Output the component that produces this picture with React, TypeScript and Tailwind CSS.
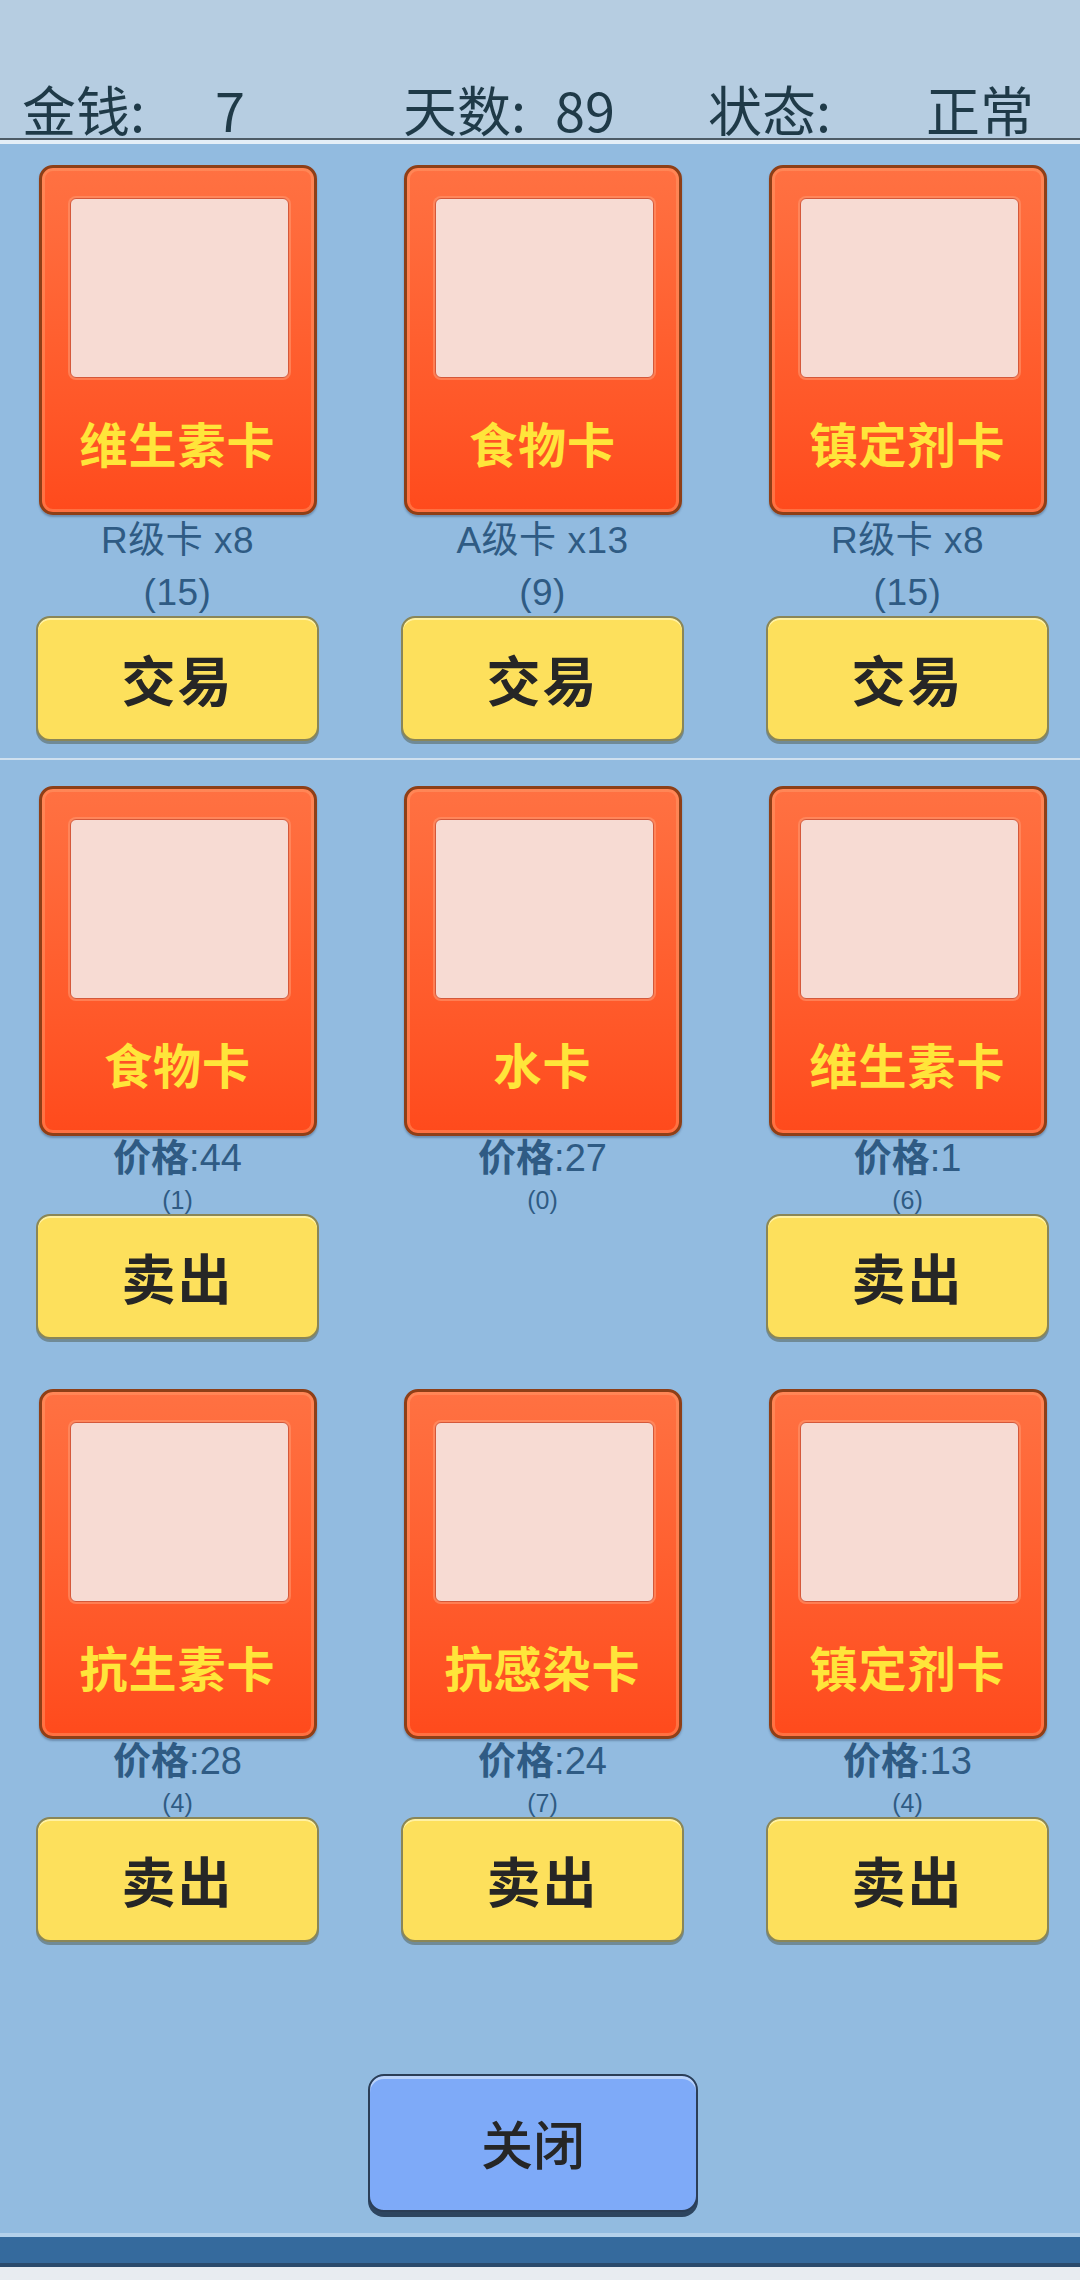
import React from "react";

const FONT = { fontFamily: '"Noto Sans CJK SC", "Noto Sans", sans-serif' };
const INFO_FONT = { fontFamily: '"Liberation Sans", "Noto Sans CJK SC", sans-serif' };

type Held = { name: string; grade: string; count: number };
type Sale = { name: string; price: number; stock: number; sellable: boolean };

const held: Held[] = [
  { name: "维生素卡", grade: "R级卡 x8", count: 15 },
  { name: "食物卡", grade: "A级卡 x13", count: 9 },
  { name: "镇定剂卡", grade: "R级卡 x8", count: 15 },
];

const sales: Sale[] = [
  { name: "食物卡", price: 44, stock: 1, sellable: true },
  { name: "水卡", price: 27, stock: 0, sellable: false },
  { name: "维生素卡", price: 1, stock: 6, sellable: true },
  { name: "抗生素卡", price: 28, stock: 4, sellable: true },
  { name: "抗感染卡", price: 24, stock: 7, sellable: true },
  { name: "镇定剂卡", price: 13, stock: 4, sellable: true },
];

function Card({ name }: { name: string }) {
  return (
    <div className="w-[278px] h-[350px] mx-auto rounded-[14px] border-[3px] border-[#8e3f17] bg-gradient-to-b from-[#ff7142] via-[#ff5f2f] to-[#ff4a1c] shadow-[inset_0_0_0_3px_rgba(255,160,110,0.45),0_2px_2px_rgba(40,60,90,0.35)] flex flex-col">
      <div className="mt-[30px] ml-[28px] w-[219px] h-[180px] rounded-[6px] bg-[#f7dbd3] border border-[#d4583a] shadow-[0_0_0_2px_rgba(255,150,110,0.6)]" />
      <div className="flex-1 flex items-center justify-center pb-[6px]">
        <span className="text-[48px] leading-none font-bold text-[#ffe53a] tracking-[1px]">{name}</span>
      </div>
    </div>
  );
}

function YellowButton({ label }: { label: string }) {
  return (
    <div className="h-[125px] w-full rounded-[14px] bg-[#fde05c] border-2 border-[#8a8657] shadow-[0_3px_0_rgba(70,80,60,0.45),inset_0_2px_0_rgba(255,245,180,0.8)] flex items-center justify-center">
      <span className="text-[54px] leading-none font-bold text-[#262626] tracking-[2px]">{label}</span>
    </div>
  );
}

export default function App() {
  return (
    <div className="w-[1080px] h-[2280px] flex flex-col bg-[#92bbe0] overflow-hidden" style={FONT}>
      {/* Status bar */}
      <div className="h-[140px] bg-[#b6cde1] flex items-end text-[54px] leading-none text-[#1f3a48] pb-[2px] border-b-2 border-[#4d5b66]">
        <span className="w-[215px] pl-[22px]">金钱:</span>
        <span className="w-[188px]">7</span>
        <span className="w-[152px]">天数:</span>
        <span className="w-[153px]">89</span>
        <span className="w-[218px]">状态:</span>
        <span>正常</span>
      </div>
      <div className="h-[4px] bg-[#e4eef7]" />

      {/* Owned cards */}
      <div className="grid grid-cols-3 gap-x-[82px] pl-[36px] pr-[31px] pt-[21px]">
        {held.map((h) => (
          <div key={h.name} className="flex flex-col">
            <Card name={h.name} />
            <div className="h-[101px] flex flex-col items-center text-[37px] text-[#2f5b84] tracking-[0.5px]" style={INFO_FONT}>
              <span className="leading-[52px]">{h.grade}</span>
              <span className="leading-[52px]">({h.count})</span>
            </div>
            <YellowButton label="交易" />
          </div>
        ))}
      </div>

      <div className="mt-[17px] h-[2px] bg-[#cfe0ef]" />

      {/* Market cards */}
      <div className="grid grid-cols-3 gap-x-[82px] gap-y-[50px] pl-[36px] pr-[31px] pt-[26px]">
        {sales.map((s) => (
          <div key={s.name + s.price} className="flex flex-col">
            <Card name={s.name} />
            <div className="h-[78px] flex flex-col items-center text-[#2f5b84]" style={INFO_FONT}>
              <span className="h-[42px] leading-[44px] text-[38px] font-bold">
                价格<span className="font-normal">:{s.price}</span>
              </span>
              <span className="h-[36px] leading-[44px] text-[25px]">({s.stock})</span>
            </div>
            {s.sellable ? <YellowButton label="卖出" /> : <div className="h-[125px]" />}
          </div>
        ))}
      </div>

      {/* Close */}
      <div className="mt-[132px] ml-[368px] w-[330px] h-[138px] rounded-[16px] bg-[#7eaaf8] border-2 border-[#2b3e57] shadow-[0_5px_0_#2d4560,inset_0_3px_0_#b9d2fb] flex items-center justify-center">
        <span className="text-[52px] leading-none text-[#262626] font-medium">关闭</span>
      </div>

      <div className="flex-1" />
      {/* Bottom bar */}
      <div className="h-[4px] bg-[#b3d0ea]" />
      <div className="h-[26px] bg-[#356a9d]" />
      <div className="h-[4px] bg-[#2a4a6c]" />
      <div className="h-[13px] bg-[#e8ecf1]" />
    </div>
  );
}
